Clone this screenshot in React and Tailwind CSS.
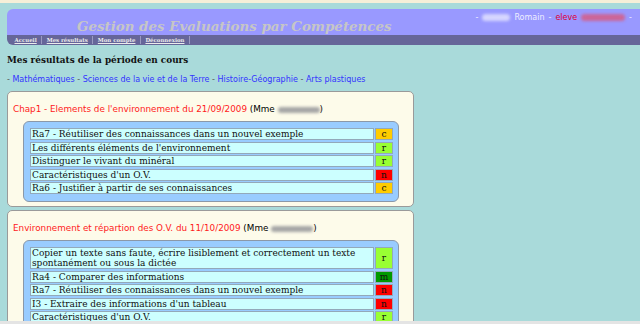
const rows1 = [
  { label: "Ra7 - Réutiliser des connaissances dans un nouvel exemple", note: "c" },
  { label: "Les différents éléments de l'environnement", note: "r" },
  { label: "Distinguer le vivant du minéral", note: "r" },
  { label: "Caractéristiques d'un O.V.", note: "n" },
  { label: "Ra6 - Justifier à partir de ses connaissances", note: "c" },
];

const rows2 = [
  {
    label: "Copier un texte sans faute, écrire lisiblement et correctement un texte spontanément ou sous la dictée",
    note: "r",
  },
  { label: "Ra4 - Comparer des informations", note: "m" },
  { label: "Ra7 - Réutiliser des connaissances dans un nouvel exemple", note: "n" },
  { label: "I3 - Extraire des informations d'un tableau", note: "n" },
  { label: "Caractéristiques d'un O.V.", note: "r" },
];

const noteColors = {
  c: "bg-[#ffcc00]",
  r: "bg-[#99ff33]",
  n: "bg-[#ff0000]",
  m: "bg-[#009900]",
};

const Blur = ({ className }) => (
  <span className={"inline-block rounded-full blur-[1.5px] align-middle " + className} />
);

const Evaluation = ({ title, rows }) => (
  <div className="w-[407px] rounded-[5px] border border-[#9a9a9a] bg-[#fdfbea] pt-[11px] pb-[4px]">
    <p className="pl-[5px] text-[8.8px] leading-[12px] font-['DejaVu_Sans',sans-serif] text-black">
      <span className="text-[#ff1a1a]">{title}</span> (Mme <Blur className="h-[6px] w-[42px] bg-[#a6a6a6]" />)
    </p>
    <div className="mt-[6px] ml-[15px] mr-[14px] rounded-[6px] border border-[#8b98a8] bg-[#99ccff] pt-[6px] pr-[5px] pb-[7px] pl-[6px]">
      <div className="grid grid-cols-[1fr_18px] gap-x-[1px] gap-y-[1.5px] font-['DejaVu_Serif',serif] text-[9px] leading-[10px] text-[#111]">
        {rows.map((row, i) => (
          <div key={i} className="contents">
            <div className="min-h-[12px] border border-[#93a9ba] bg-[#ccffff] pl-[1px]">{row.label}</div>
            <div
              className={
                "flex min-h-[12px] items-center justify-center border border-[#93a9ba] " + noteColors[row.note]
              }
            >
              {row.note}
            </div>
          </div>
        ))}
      </div>
    </div>
  </div>
);

export default function App() {
  return (
    <div className="relative h-[324px] w-[640px] overflow-hidden bg-[#a9dada]">
      <div className="h-[3px] bg-[#f6efd8]" />

      <div className="pl-[7px] pt-[6px]">
        {/* bandeau */}
        <div className="flex h-[26px] justify-between rounded-tl-[6px] bg-[#9999ff]">
          <h1 className="self-end pl-[70px] pb-[1px] font-['DejaVu_Serif',serif] text-[13.4px] leading-[16px] font-bold italic text-[#c6c6c6]">
            Gestion des Evaluations par Compétences
          </h1>
          <div className="flex items-start gap-[4px] pt-[4px] pr-[8px] font-['DejaVu_Sans',sans-serif] text-[8px] leading-[10px] text-[#eeeeff]">
            <span>-</span>
            <Blur className="mt-[1px] h-[7px] w-[28px] bg-[#d6d6ff]" />
            <span>Romain</span>
            <span>-</span>
            <span className="text-[#dd0033]">eleve</span>
            <Blur className="mt-[1px] h-[7px] w-[44px] bg-[#cc6699]" />
            <span>-</span>
          </div>
        </div>
        <nav className="flex h-[10px] items-center rounded-bl-[6px] bg-[#666699] pl-[3px] font-['DejaVu_Serif',serif] text-[5.4px] leading-[8px] font-bold text-[#ececec]">
          {["Accueil", "Mes résultats", "Mon compte", "Déconnexion"].map((item) => (
            <a key={item} href="#" className="border-r border-[#9a9ac0] px-[4.5px] underline">
              {item}
            </a>
          ))}
        </nav>

        <h2 className="mt-[9px] font-['DejaVu_Serif',serif] text-[8.9px] leading-[12px] font-bold text-[#111]">
          Mes résultats de la période en cours
        </h2>
        <p className="mt-[9px] font-['DejaVu_Sans',sans-serif] text-[8px] leading-[10px] text-[#555]">
          - <a href="#" className="text-[#3333ff]">Mathématiques</a> -{" "}
          <a href="#" className="text-[#3333ff]">Sciences de la vie et de la Terre</a> -{" "}
          <a href="#" className="text-[#3333ff]">Histoire-Géographie</a> -{" "}
          <a href="#" className="text-[#3333ff]">Arts plastiques</a>
        </p>

        <div className="mt-[6px] flex flex-col gap-[3px]">
          <Evaluation title="Chap1 - Elements de l'environnement du 21/09/2009" rows={rows1} />
          <Evaluation title="Environnement et répartion des O.V. du 11/10/2009" rows={rows2} />
        </div>
      </div>

      <div className="absolute bottom-0 left-0 h-[3px] w-full bg-[#e4e4e4]" />
    </div>
  );
}
